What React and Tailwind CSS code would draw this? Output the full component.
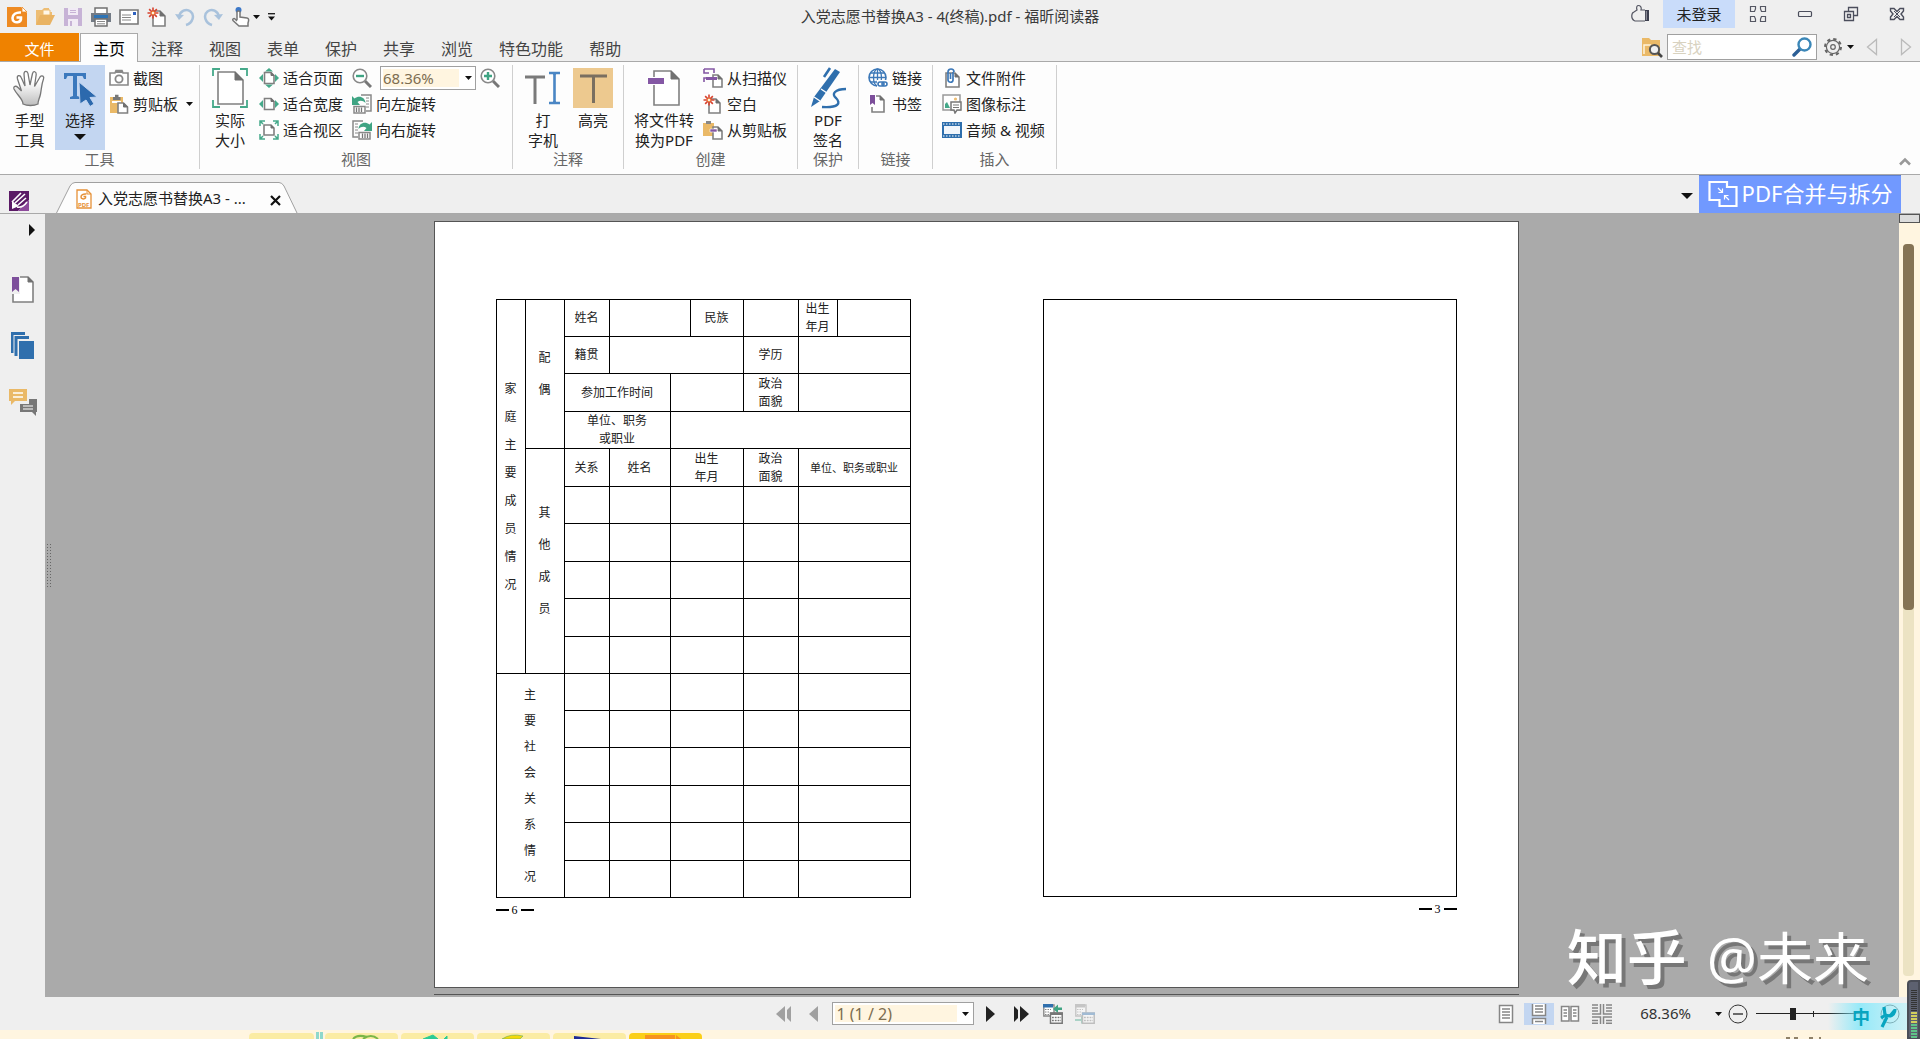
// src/App.jsx
import React from "react";

/* ---------- small shared pieces ---------- */

const Svg = ({ w = 20, h = 20, className = "", children }) => (
  <svg
    width={w}
    height={h}
    viewBox={`0 0 ${w} ${h}`}
    fill="none"
    aria-hidden="true"
    className={`shrink-0 ${className}`}
  >
    {children}
  </svg>
);

const Caret = ({ w = 7, h = 4, className = "" }) => (
  <Svg w={w} h={h} className={className}>
    <path d={`M0 0H${w}L${w / 2} ${h}Z`} fill="#111" />
  </Svg>
);

const Burst = ({ x = 6, y = 6, r = 6 }) => (
  <g stroke="#d8432f" strokeWidth="1.6" transform={`translate(${x} ${y})`}>
    <path d={`M0 ${-r}V${r}M${-r} 0H${r}`} />
    <path d={`M${-r * 0.7} ${-r * 0.7}L${r * 0.7} ${r * 0.7}M${r * 0.7} ${-r * 0.7}L${-r * 0.7} ${r * 0.7}`} />
    <circle r="1.6" fill="#fff" stroke="#f08c3c" strokeWidth="1" />
  </g>
);

const Sheet = ({ x = 0, y = 0, w = 11, h = 14, c = 4 }) => (
  <g transform={`translate(${x} ${y})`}>
    <path d={`M0 0H${w - c}L${w} ${c}V${h}H0Z`} fill="#fff" stroke="#808080" strokeWidth="1.6" />
    <path d={`M${w - c} 0L${w} ${c}H${w - c}Z`} fill="#707070" stroke="#707070" />
  </g>
);

/* ---------- quick access bar icons ---------- */

const LogoIcon = () => (
  <Svg>
    <path d="M0 0H14L20 6V20H0Z" fill="#ee8a22" />
    <path d="M15 0L20 5H15Z" fill="#fff" stroke="#ee8a22" strokeWidth=".8" />
    <path d="M14 5.500C9 5 5.500 7.500 5.500 11S8 15.500 10.500 15.200C13 15 14.200 13 14 10.500H9.500" stroke="#fff" strokeWidth="2.600" />
  </Svg>
);

const OpenIcon = () => (
  <Svg>
    <path d="M1 18V3H7L9 1H14V5H17V8" fill="#edbd74" />
    <path d="M8 3H15V8H8Z" fill="#fff7e8" stroke="#edbd74" />
    <path d="M5 8H20L15 18H1Z" fill="#e9b363" />
  </Svg>
);

const SaveIcon = () => (
  <Svg>
    <path d="M1 1H19V19H1Z" fill="#c7b3d6" />
    <path d="M5 1H15V8H5Z" fill="#f1ebf5" />
    <path d="M7 3.500H13M7 5.500H13" stroke="#c7b3d6" />
    <path d="M5 12H15V19H5Z" fill="#f1ebf5" />
    <path d="M7 14H9V19H7Z" fill="#c7b3d6" />
  </Svg>
);

const PrintIcon = () => (
  <Svg>
    <path d="M4 1H16V7H4Z" fill="#fff" stroke="#707070" strokeWidth="1.500" />
    <path d="M0 6H20V15H0Z" fill="#737b85" />
    <path d="M3 8H17V11H3Z" fill="#2e74b5" />
    <path d="M4 12H16V19H4Z" fill="#fff" stroke="#707070" strokeWidth="1.500" />
    <path d="M6 14.500H14M6 16.800H14" stroke="#8a8a8a" />
  </Svg>
);

const MailIcon = () => (
  <Svg>
    <path d="M1 3H19V17H1Z" fill="#fff" stroke="#777" strokeWidth="1.600" />
    <path d="M3 8H12M3 10.500H12M3 13H12" stroke="#888" />
    <path d="M14 5H17V8H14Z" fill="#2e62c0" />
  </Svg>
);

const NewIcon = () => (
  <Svg>
    <Sheet x={6} y={4} w={12} h={15} c={5} />
    <Burst x={6} y={6} r={5.5} />
  </Svg>
);

const UndoIcon = ({ flip }) => (
  <Svg className={flip ? "-scale-x-100" : ""}>
    <path d="M4 10C5 4 11 1 15.500 4.500S18 16 11 18" stroke="#a9c2dc" strokeWidth="2.500" />
    <path d="M0 7L4 13L9 8Z" fill="#a9c2dc" />
  </Svg>
);

const TouchIcon = () => (
  <Svg>
    <circle cx="7.500" cy="3" r="3" fill="#3c78c8" />
    <path
      d="M6 13V5C6 3.500 9 3.500 9 5V10L16 11C18 11.500 18 13 17 16V19H8L2 13.500C1 12 3 11 4 12L6 14"
      fill="#fff"
      stroke="#777"
      strokeWidth="1.500"
    />
  </Svg>
);

/* ---------- ribbon icons ---------- */

const HandIcon = () => (
  <Svg w={36} h={38}>
    <defs>
      <linearGradient id="palm" x1="0" y1="0" x2="0" y2="1">
        <stop offset=".3" stopColor="#fff" />
        <stop offset="1" stopColor="#bdbdbd" />
      </linearGradient>
    </defs>
    <path
      d="M11 35C11 30 5 26 2 20C1 17 4 16.500 6 18.500L9.500 22L5.500 10C4.500 6 8 5.500 9.200 8.500L13 17L12 5C12 1.500 15.500 1.500 16 4.500L18 16L20.500 4.500C21.500 1.500 24.500 2.500 24.200 5.500L22.500 17.500L28 8C30 5.500 32.500 7.500 31.500 10C29.500 15 29.500 20 28.500 25C27.500 30 26 31 26 35C22 37 15 37 11 35Z"
      fill="url(#palm)"
      stroke="#777"
      strokeWidth="1.300"
    />
  </Svg>
);

const SelectIcon = () => (
  <Svg w={36} h={38}>
    <path d="M2 4H24V10H22L20.500 7H15V27L18 28V30H8V28L11 27V7H5.500L4 10H2Z" fill="#3a78bd" />
    <path d="M17 13L35 28L28 28.500L32 35L28 37.500L24 31L18 35Z" fill="#2c69ad" stroke="#c3d6f1" />
  </Svg>
);

const CameraIcon = () => (
  <Svg>
    <path d="M1 5H6L7 2.500H13L14 5H19V17H1Z" fill="#fff" stroke="#888" strokeWidth="1.600" />
    <circle cx="10" cy="11" r="3.600" stroke="#888" strokeWidth="1.800" />
    <path d="M7 2.500H13V5H7Z" fill="#888" />
  </Svg>
);

const PasteIcon = () => (
  <Svg>
    <path d="M1 3H14V19H1Z" fill="#eab967" />
    <path d="M4 3H6V0.800H9.500V3H11.500V6H4Z" fill="#777" />
    <path d="M3 7H12V9H3Z" fill="#fff" />
    <Sheet x={9} y={9} w={9.5} h={10} c={4} />
  </Svg>
);

const ActualIcon = () => (
  <Svg w={36} h={40}>
    <path d="M1 8V1H8M28 1H35V8M1 32V39H8M28 39H35V32" stroke="#45a98a" strokeWidth="1.800" />
    <Sheet x={6} y={4} w={25} h={32} c={8} />
  </Svg>
);

const FitIcon = ({ mode }) => (
  <Svg>
    {mode === "area" ? (
      <>
        <path d="M1 6V1H6M14 1H19V6M1 14V19H6M14 19H19V14M1 1L4 4M19 1L16 4M1 19L4 16M19 19L16 16" stroke="#45a98a" strokeWidth="1.500" />
        <Sheet x={5} y={5} w={10} h={10} c={3} />
      </>
    ) : (
      <>
        <path d="M0 10L4 6V14ZM20 10L16 6V14Z" fill="#45a98a" />
        {mode === "page" && <path d="M10 0L14 3.500H6ZM10 20L14 16.500H6Z" fill="#45a98a" />}
        <Sheet x={5.500} y={4.500} w={9.500} h={11} c={3} />
      </>
    )}
  </Svg>
);

const ZoomIcon = ({ plus }) => (
  <Svg>
    <path d="M13 13L19 19" stroke="#777" strokeWidth="3" />
    <circle cx="8" cy="8" r="6.800" fill="#fff" stroke="#888" strokeWidth="1.600" />
    <path d={plus ? "M4 8H12M8 4V12" : "M4 8H12"} stroke="#3fa483" strokeWidth="2.400" />
  </Svg>
);

const RotateIcon = ({ flip }) => (
  <Svg className={flip ? "-scale-x-100" : ""}>
    <path d="M9 1H19V17H14" stroke="#888" strokeWidth="1.500" />
    <path d="M14 4H17M14 7H17M14 10H17M14 13H17" stroke="#888" />
    <path d="M0 2V11H8L5.500 8C8 6 11 6.500 13.500 9C13 3 7 1 2.500 4.500Z" fill="#3fa483" />
    <path d="M2 12.500H13V19H2Z" fill="#fff" stroke="#888" strokeWidth="1.500" />
    <path d="M4.500 13.500V18M7 13.500V18M9.500 13.500V18" stroke="#777" strokeWidth="1.300" />
  </Svg>
);

const TypewriterIcon = () => (
  <Svg w={38} h={40}>
    <path d="M1 9H21M11 9V36" stroke="#7a7a7a" strokeWidth="3" />
    <path d="M25 5H36M25 35H36M30.500 5V35" stroke="#4a86c4" strokeWidth="2.600" />
    <path d="M28 5L30.500 8L33 5ZM28 35L30.500 32L33 35Z" fill="#4a86c4" />
  </Svg>
);

const HighlightIcon = () => (
  <Svg w={40} h={40}>
    <path d="M0 0H40V40H0Z" fill="#edc98f" />
    <path d="M7 8H34M20.500 8V35" stroke="#7a6f60" strokeWidth="3" />
  </Svg>
);

const ConvertIcon = () => (
  <Svg w={34} h={40}>
    <Sheet x={7} y={3} w={25} h={34} c={8} />
    <path d="M0 9H18V17H0Z" fill="#fff" />
    <path d="M1 10H17V16H1Z" fill="#8457a4" />
  </Svg>
);

const ScanIcon = () => (
  <Svg>
    <path d="M1 1H11V5M1 1V5H6M1 14V10H10" stroke="#8457a4" strokeWidth="1.600" />
    <Sheet x={10} y={7} w={9} h={12} c={4} />
    <path d="M3 9H14V12H3Z" fill="#8457a4" />
  </Svg>
);

const BlankIcon = () => (
  <Svg>
    <Sheet x={6} y={5} w={11} h={14} c={4} />
    <Burst x={6} y={6} r={5.500} />
  </Svg>
);

const ClipIcon = () => (
  <Svg>
    <path d="M0 3H11V16H0Z" fill="#eab967" />
    <path d="M3 1H8V4H3Z" fill="#888" />
    <Sheet x={10} y={7} w={9} h={12} c={4} />
    <path d="M7 9H14V12H7Z" fill="#8457a4" stroke="#fff" strokeWidth=".6" />
  </Svg>
);

const SignIcon = () => (
  <Svg w={38} h={42}>
    <path d="M26 2L31 5L11 34L2 40L5 30Z" fill="#2f6fad" />
    <path d="M12 22L18 26M5 30L11 34" stroke="#fff" strokeWidth="1.400" />
    <path d="M21 1L15 10" stroke="#2f6fad" strokeWidth="2.600" />
    <path d="M37 22C26 22 22 27 27 31C32 36 30 41 13 40" stroke="#2f6fad" strokeWidth="2.400" />
  </Svg>
);

const GlobeIcon = () => (
  <Svg>
    <circle cx="9.500" cy="9.500" r="8.500" stroke="#3c78b8" strokeWidth="1.600" />
    <ellipse cx="9.500" cy="9.500" rx="4" ry="8.500" stroke="#3c78b8" strokeWidth="1.300" />
    <path d="M1 9.500H18M2.500 5H16.500M2.500 14H10M9.500 1V18" stroke="#3c78b8" strokeWidth="1.300" />
    <path d="M9 12H20V20H9Z" fill="#fff" />
    <rect x="10" y="14" width="6" height="4" rx="2" stroke="#3c78b8" strokeWidth="1.600" />
    <rect x="14" y="14" width="5" height="4" rx="2" stroke="#3c78b8" strokeWidth="1.600" />
  </Svg>
);

const BookmarkIcon = ({ big }) =>
  big ? (
    <Svg w={24} h={28}>
      <Sheet x={2} y={1} w={20} h={25} c={5} />
      <path d="M0 0H9V18H0Z" fill="#efefef" />
      <path d="M1 1H8V16L4.500 13L1 16Z" fill="#7d4f9b" />
    </Svg>
  ) : (
    <Svg>
      <Sheet x={4} y={2} w={12} h={16} c={4} />
      <path d="M1 0H8V13H1Z" fill="#fff" />
      <path d="M2 1H7V11L4.500 9L2 11Z" fill="#7d4f9b" />
    </Svg>
  );

const AttachIcon = () => (
  <Svg>
    <Sheet x={4} y={5} w={13} h={14} c={4} />
    <path d="M11 4V12C11 15 6 15 6 12V4C6 0 12 0 12 4M8.500 5V11" stroke="#3c78b8" strokeWidth="1.700" />
  </Svg>
);

const ImageIcon = () => (
  <Svg>
    <path d="M1 1H18V16H1Z" fill="#fff" stroke="#999" strokeWidth="1.500" />
    <circle cx="13.500" cy="5" r="1.600" fill="#edbd74" />
    <path d="M3 14V10L5 8L8 14Z" fill="#45a98a" />
    <path d="M9 8H19V16H15L13 19L12 16H9Z" fill="#fff" stroke="#777" strokeWidth="1.500" />
    <path d="M11 11H17M11 13.500H17" stroke="#777" />
  </Svg>
);

const FilmIcon = () => (
  <Svg>
    <path d="M0 2H20V18H0Z" fill="#2f6fad" />
    <path d="M2 6H18V14H2Z" fill="#f2f6fb" />
    <path d="M1 4H19M1 16H19" stroke="#fff" strokeWidth="1.200" strokeDasharray="1.500 1.500" />
  </Svg>
);

/* ---------- window controls ---------- */

const ThumbIcon = () => (
  <Svg w={20} h={20}>
    <path d="M14 6H10C11 3 9 1.500 7.500 1.500S5 3 6 6L3 8C0 9 0 15 3 16.500L4 17H14" stroke="#555763" strokeWidth="1.200" />
    <path d="M14 6H18V17H14Z" fill="#3c3f4e" />
    <path d="M15.300 7V16" stroke="#9a9ca6" />
  </Svg>
);

const SkinIcon = () => (
  <Svg w={18} h={18}>
    <path
      d="M1.500 1.500H6.500V4L5.500 6.500H1.500ZM16.500 1.500H11.500V4L12.500 6.500H16.500ZM1.500 16.500H6.500V14L5.500 11.500H1.500ZM16.500 16.500H11.500V14L12.500 11.500H16.500Z"
      stroke="#555763"
      strokeWidth="1.200"
    />
  </Svg>
);

const MinIcon = () => (
  <Svg w={16} h={16}>
    <rect x="1.500" y="5.500" width="13" height="5" rx="1" stroke="#4b4e5c" strokeWidth="1.200" />
  </Svg>
);

const RestoreIcon = () => (
  <Svg w={16} h={16}>
    <path d="M5.500 5V1.500H14.500V9.500H11M1.500 5.500H10.500V14.500H1.500ZM4.500 8.500H7.500V11.500H4.500Z" stroke="#4b4e5c" strokeWidth="1.300" />
  </Svg>
);

const CloseIcon = () => (
  <Svg w={16} h={16}>
    <path
      d="M1.500 2.500H5L8 5.500L11 2.500H14.500V5L12 8L14.500 11V13.500H11L8 10.500L5 13.500H1.500V11L4 8L1.500 5Z"
      stroke="#4b4e5c"
      strokeWidth="1.400"
    />
    <path d="M5 5L11 11M11 5L5 11" stroke="#4b4e5c" />
  </Svg>
);

const FolderSearchIcon = () => (
  <Svg w={22} h={22}>
    <path d="M1 2H8L10 4H19V20H1Z" fill="#eab967" />
    <path d="M3 18V9H10" stroke="#fff3dc" strokeWidth="1.500" />
    <circle cx="13.500" cy="13.500" r="4.600" fill="#efefef" stroke="#555" strokeWidth="2" />
    <path d="M17 17L21 21" stroke="#444" strokeWidth="2.600" />
  </Svg>
);

const SearchIcon = () => (
  <Svg>
    <path d="M8 12L2 18" stroke="#2c5f96" strokeWidth="3.400" strokeLinecap="round" />
    <circle cx="12.500" cy="7.500" r="6" fill="#fff" stroke="#3b87b8" strokeWidth="2.400" />
  </Svg>
);

const GearIcon = () => (
  <Svg>
    <circle cx="10" cy="10" r="8" stroke="#666" strokeWidth="2" strokeDasharray="3.300 2.980" />
    <circle cx="10" cy="10" r="6.600" stroke="#666" strokeWidth="1.200" fill="#efefef" />
    <circle cx="10" cy="10" r="2.300" stroke="#666" strokeWidth="1.200" />
  </Svg>
);

const MergeIcon = () => (
  <Svg w={30} h={28}>
    <path d="M1.500 2H19V7H28.500V26H11.500V20H1.500Z" stroke="#fff" strokeWidth="2.200" />
    <path d="M10 8L14 12M14.500 8.500V12.500H10.500M21 20L17 16M16.500 19.500V15.500H20.500" stroke="#fff" strokeWidth="1.200" />
  </Svg>
);

/* ---------- side panel icons ---------- */

const PhantomIcon = () => (
  <Svg>
    <path d="M0 0H20V9L9 20H0Z" fill="#5b1a66" />
    <path d="M20 9V20H9Z" fill="#8d4a9b" />
    <path d="M3 11L12 2M6 12L16 3M9 14L17 7" stroke="#fff" strokeWidth="1.600" />
    <path d="M3 10L10 15L3 18Z" fill="#fff" />
    <path d="M8 16C12 17 15 15 18 11" stroke="#fff" strokeWidth="1.600" />
  </Svg>
);

const PdfDocIcon = () => (
  <Svg w={16} h={20}>
    <path d="M1 1H11L15 5V19H1Z" fill="#fff" stroke="#e69138" strokeWidth="1.300" />
    <path d="M11 1V5H15" stroke="#e69138" />
    <path d="M10.500 5C7 4.500 5 6 5 8S8 10.500 9.500 9V7.500H7.500" stroke="#e69138" strokeWidth="1.500" />
    <text x="2" y="17.500" fontSize="6" fontWeight="700" fill="#e69138" fontFamily="Noto Sans">PDF</text>
  </Svg>
);

const PagesIcon = () => (
  <Svg w={24} h={28}>
    <path d="M14 1.500H1V21" stroke="#2f6fad" strokeWidth="3" />
    <path d="M18 5.500H5V24" stroke="#2f6fad" strokeWidth="3" />
    <path d="M8 9H23V27H8Z" fill="#2f6fad" />
  </Svg>
);

const CommentsIcon = () => (
  <Svg w={28} h={28}>
    <path d="M0 1H18V13H6L2 17V13H0Z" fill="#eab967" />
    <path d="M4 5H14M4 9H14" stroke="#fff" strokeWidth="1.400" />
    <path d="M20 11H28V24H27V28L23 24H11V16H20Z" fill="#777" />
    <path d="M14 18H24M14 21H24" stroke="#fff" strokeWidth="1.200" />
  </Svg>
);

/* ---------- status bar icons ---------- */

const ViewIcon = ({ kind }) => (
  <Svg>
    <g fill="#fff" stroke="#868686" strokeWidth="1.500">
      {kind === "single" && <path d="M3.500 1.500H16.500V18.500H3.500ZM6 5H14M6 8H14M6 11H14M6 14H14" />}
      {kind === "scroll" && <path d="M3.500 0V11.500H16.500V0M6 2H14M6 5H14M6 8H14M3.500 20V14.500H16.500V20M6 17.500H14" />}
      {kind === "facing" && (
        <path d="M1.500 2.500H9V17H1.500ZM11 2.500H18.500V17H11ZM3.500 6H7M3.500 9H7M3.500 12H7M13 6H16.500M13 9H16.500M13 12H16.500" />
      )}
      {kind === "both" && (
        <path d="M0 10H8.500V0M20 10H11.500V0M0 13H8.500V20M20 13H11.500V20M0 1H6M0 4H6M0 7H6M14 1H20M14 4H20M14 7H20M0 16.500H6M0 19.300H6M14 16.500H20M14 19.300H20" fill="none" />
      )}
    </g>
  </Svg>
);

const JumpIcon = ({ faded }) => (
  <Svg className={faded ? "opacity-40" : ""}>
    <path d="M0.800 1H11V12H0.800Z" fill="#fff" stroke="#888" strokeWidth="1.400" />
    <path d="M0 0H10V3.500H0Z" fill={faded ? "#888" : "#2f6fad"} />
    <path d="M2 5.500H8M2 8H6M2 10.500H6" stroke="#888" strokeDasharray="1.500 1" />
    {faded ? (
      <path d="M0 15H6V12L10 16L6 20V17H0Z" fill="#45a98a" />
    ) : (
      <path d="M19 3.500H15V0.500L10 5L15 9V6H19Z" fill="#3fa483" />
    )}
    <path d="M7.500 9H19.200V19.200H7.500Z" fill="#fff" stroke="#777" strokeWidth="1.500" />
    <path d="M7 8.500H20V11H7Z" fill={faded ? "#2f6fad" : "#777"} />
    <path d="M9 13.500H18M9 16.500H18" stroke="#777" strokeWidth="1.300" strokeDasharray="1.800 1" />
  </Svg>
);

/* ---------- title bar + menu tabs ---------- */

const quickIcons = [
  ["福昕", <LogoIcon />],
  ["打开", <OpenIcon />],
  ["保存", <SaveIcon />],
  ["打印", <PrintIcon />],
  ["邮件", <MailIcon />],
  ["新建", <NewIcon />],
  ["撤销", <UndoIcon />],
  ["重做", <UndoIcon flip />],
  ["触摸模式", <TouchIcon />],
];

const TitleBar = () => (
  <div className="grid h-[33px] grid-cols-[1fr_auto_1fr] items-center">
    <div className="flex items-center gap-2 pl-[7px]">
      {quickIcons.map(([label, icon]) => (
        <button key={label} type="button" aria-label={label}>
          {icon}
        </button>
      ))}
      <button type="button" aria-label="更多" className="-ml-1.5">
        <Caret />
      </button>
      <button type="button" aria-label="自定义">
        <Svg w={7} h={8}>
          <path d="M0 .7H7" stroke="#222" strokeWidth="1.400" />
          <path d="M0 3.500H7L3.500 7.500Z" fill="#111" />
        </Svg>
      </button>
    </div>
    <h1 className="pr-5 pb-0.5 text-[15px] leading-5 text-[#3a3a3a]">
      入党志愿书替换A3 - 4(终稿).pdf - 福昕阅读器
    </h1>
    <div className="flex h-full items-start justify-end pr-[15px]">
      <button type="button" aria-label="点赞" className="flex h-7 w-8 items-center">
        <ThumbIcon />
      </button>
      <button type="button" className="mr-3.5 h-7 w-[72px] bg-[#c9dcfa] text-[15px] text-[#222]">
        未登录
      </button>
      <div className="flex h-7 items-center gap-[30px]">
        <button type="button" aria-label="皮肤">
          <SkinIcon />
        </button>
        <button type="button" aria-label="最小化">
          <MinIcon />
        </button>
        <button type="button" aria-label="还原">
          <RestoreIcon />
        </button>
        <button type="button" aria-label="关闭">
          <CloseIcon />
        </button>
      </div>
    </div>
  </div>
);

const menuTabs = ["注释", "视图", "表单", "保护", "共享", "浏览", "特色功能", "帮助"];

const MenuBar = () => (
  <div className="flex h-7 items-stretch">
    <button type="button" className="w-[79px] bg-[#ef8200] pt-1 text-[15px] text-white">
      文件
    </button>
    <nav className="flex flex-1 text-base text-[#444]">
      <button
        type="button"
        className="relative -mb-px ml-px border border-b-0 border-[#a9a9a9] bg-[#fdfdfd] px-3 pt-0.5 text-black"
      >
        主页
      </button>
      {menuTabs.map((tab) => (
        <button key={tab} type="button" className="px-[13px] pt-1">
          {tab}
        </button>
      ))}
    </nav>
    <div className="flex items-center pr-2">
      <button type="button" aria-label="在文件夹中查找" className="mr-1">
        <FolderSearchIcon />
      </button>
      <label className="flex h-[26px] w-[150px] items-center border border-[#a0a0a0] bg-white px-1">
        <input
          type="text"
          aria-label="查找"
          placeholder="查找"
          className="min-w-0 flex-1 text-[15px] leading-5 outline-none placeholder:text-[#d8d2bf]"
        />
        <SearchIcon />
      </label>
      <button type="button" aria-label="设置" className="ml-1.5 flex items-center gap-1">
        <GearIcon />
        <Caret />
      </button>
      <button type="button" aria-label="上一个" className="ml-3">
        <Svg w={12} h={18}>
          <path d="M10.500 1.500V16.500L1.500 9Z" stroke="#bbb" strokeWidth="1.300" />
        </Svg>
      </button>
      <button type="button" aria-label="下一个" className="ml-[22px]">
        <Svg w={12} h={18}>
          <path d="M1.500 1.500V16.500L10.500 9Z" stroke="#bbb" strokeWidth="1.300" />
        </Svg>
      </button>
    </div>
  </div>
);

/* ---------- ribbon ---------- */

const Group = ({ label, className = "", children }) => (
  <section className={`flex h-[104px] shrink-0 flex-col border-r border-[#cfcfcf] ${className}`}>
    <div className="flex h-[84px] items-start">{children}</div>
    <div className="text-center leading-5 text-[#666]">{label}</div>
  </section>
);

const BigButton = ({ icon, lines, className = "" }) => (
  <button type="button" className={`flex flex-col items-center leading-5 ${className}`}>
    <span className="flex h-[45px] items-center">{icon}</span>
    {lines.map((line) => (
      <span key={line}>{line}</span>
    ))}
  </button>
);

const SmallButton = ({ icon, label, arrow }) => (
  <button type="button" className="flex h-[26px] items-center gap-1">
    {icon}
    <span className="whitespace-nowrap">{label}</span>
    {arrow && <Caret className="ml-1" />}
  </button>
);

const Ribbon = () => (
  <div className="flex h-[114px] items-start border-y border-[#a9a9a9] bg-[#fdfdfd] pt-[3px] text-[15px] text-[#222]">
    <Group label="工具" className="w-[200px]">
      <BigButton className="w-[55px] pl-1" icon={<HandIcon />} lines={["手型", "工具"]} />
      <button type="button" className="flex h-[85px] w-[50px] flex-col items-center bg-[#c3d6f1] leading-5">
        <span className="flex h-[45px] items-center">
          <SelectIcon />
        </span>
        <span>选择</span>
        <Caret w={12} h={6} className="mt-1" />
      </button>
      <div className="ml-1">
        <SmallButton icon={<CameraIcon />} label="截图" />
        <SmallButton icon={<PasteIcon />} label="剪贴板" arrow />
      </div>
    </Group>

    <Group label="视图" className="w-[313px]">
      <BigButton className="ml-2 w-11" icon={<ActualIcon />} lines={["实际", "大小"]} />
      <div className="ml-[7px]">
        <SmallButton icon={<FitIcon mode="page" />} label="适合页面" />
        <SmallButton icon={<FitIcon mode="width" />} label="适合宽度" />
        <SmallButton icon={<FitIcon mode="area" />} label="适合视区" />
      </div>
      <div className="ml-[9px]">
        <div className="flex h-[26px] items-center">
          <button type="button" aria-label="缩小">
            <ZoomIcon />
          </button>
          <div className="mr-1 ml-2 flex h-6 w-24 items-center border border-[#a0a0a0] bg-white p-0.5">
            <input
              type="text"
              aria-label="缩放比例"
              defaultValue="68.36%"
              className="h-full w-[76px] min-w-0 bg-[#fff5e0] text-[#7d6d50] outline-none"
            />
            <button type="button" aria-label="选择比例" className="ml-1.5">
              <Caret />
            </button>
          </div>
          <button type="button" aria-label="放大">
            <ZoomIcon plus />
          </button>
        </div>
        <SmallButton icon={<RotateIcon />} label="向左旋转" />
        <SmallButton icon={<RotateIcon flip />} label="向右旋转" />
      </div>
    </Group>

    <Group label="注释" className="w-[111px]">
      <BigButton className="ml-1.5 w-12" icon={<TypewriterIcon />} lines={["打", "字机"]} />
      <BigButton className="ml-0.5 w-12" icon={<HighlightIcon />} lines={["高亮"]} />
    </Group>

    <Group label="创建" className="w-[174px]">
      <BigButton className="ml-2 w-16" icon={<ConvertIcon />} lines={["将文件转", "换为PDF"]} />
      <div className="ml-[7px]">
        <SmallButton icon={<ScanIcon />} label="从扫描仪" />
        <SmallButton icon={<BlankIcon />} label="空白" />
        <SmallButton icon={<ClipIcon />} label="从剪贴板" />
      </div>
    </Group>

    <Group label="保护" className="w-[61px]">
      <BigButton className="flex-1" icon={<SignIcon />} lines={["PDF", "签名"]} />
    </Group>

    <Group label="链接" className="w-[74px]">
      <div className="ml-[9px]">
        <SmallButton icon={<GlobeIcon />} label="链接" />
        <SmallButton icon={<BookmarkIcon />} label="书签" />
      </div>
    </Group>

    <Group label="插入" className="w-[124px]">
      <div className="ml-[9px]">
        <SmallButton icon={<AttachIcon />} label="文件附件" />
        <SmallButton icon={<ImageIcon />} label="图像标注" />
        <SmallButton icon={<FilmIcon />} label="音频 & 视频" />
      </div>
    </Group>

    <button type="button" aria-label="折叠功能区" className="mr-2 mb-2 ml-auto self-end">
      <Svg w={14} h={9}>
        <path d="M2 7.500L7 2.500L12 7.500" stroke="#999" strokeWidth="2.600" />
      </Svg>
    </button>
  </div>
);

/* ---------- document tabs ---------- */

const DocTabs = () => (
  <div className="flex h-[39px] items-end border-b border-[#a9a9a9]">
    <button type="button" aria-label="福昕高级编辑器" className="mb-0.5 ml-[9px]">
      <PhantomIcon />
    </button>
    <div className="relative ml-[27px] h-[31px] w-[242px]">
      <svg className="absolute inset-0 h-full w-full" viewBox="0 0 242 31" aria-hidden="true">
        <path d="M0.500 31L14 4Q16 0.500 19 0.500H223Q226 0.500 228 4L241 31" fill="#fdfdfd" stroke="#a0a0a0" />
      </svg>
      <div className="relative flex h-full items-center pt-0.5 pl-5">
        <PdfDocIcon />
        <span className="ml-1.5 w-[172px] truncate text-[15px] text-[#222]">入党志愿书替换A3 - ...</span>
        <button type="button" aria-label="关闭标签">
          <Svg w={11} h={11} className="mt-1">
            <path d="M1 1L10 10M10 1L1 10" stroke="#111" strokeWidth="2.200" />
          </Svg>
        </button>
      </div>
    </div>
    <button type="button" aria-label="所有标签" className="mb-3.5 ml-auto">
      <Caret w={12} h={6} />
    </button>
    <a
      href="#merge"
      className="mr-[19px] ml-1.5 flex h-[38px] w-[202px] items-center justify-center gap-1 border-t border-[#5c7fd0] bg-[#7199ff] pb-0.5 text-[22px] whitespace-nowrap text-white"
    >
      <MergeIcon />
      PDF合并与拆分
    </a>
  </div>
);

/* ---------- document ---------- */

const Cell = ({ children, ...rest }) => (
  <td {...rest} className="border border-black p-0 text-center align-middle leading-[18px]">
    {children}
  </td>
);

const Vertical = ({ text, className }) => (
  <div className={`flex flex-col items-center ${className}`}>
    {text.split("").map((ch, i) => (
      <span key={i}>{ch}</span>
    ))}
  </div>
);

const Blanks = () => (
  <>
    <Cell />
    <Cell />
    <Cell colSpan={2} />
    <Cell />
    <Cell colSpan={2} />
  </>
);

const FormTable = () => (
  <table className="w-[414px] table-fixed border-collapse text-xs text-[#222]">
    <colgroup>
      <col className="w-[29px]" />
      <col className="w-[39px]" />
      <col className="w-[45px]" />
      <col className="w-[61px]" />
      <col className="w-5" />
      <col className="w-[53px]" />
      <col className="w-[55px]" />
      <col className="w-[39px]" />
      <col className="w-[73px]" />
    </colgroup>
    <tbody>
      <tr className="h-[37px]">
        <Cell rowSpan={10}>
          <Vertical text="家庭主要成员情况" className="leading-7" />
        </Cell>
        <Cell rowSpan={4}>
          <Vertical text="配偶" className="leading-8" />
        </Cell>
        <Cell>姓名</Cell>
        <Cell colSpan={2} />
        <Cell>民族</Cell>
        <Cell />
        <Cell>
          出生
          <br />
          年月
        </Cell>
        <Cell />
      </tr>
      <tr className="h-[37px]">
        <Cell>籍贯</Cell>
        <Cell colSpan={3} />
        <Cell>学历</Cell>
        <Cell colSpan={2} />
      </tr>
      <tr className="h-[38px]">
        <Cell colSpan={2}>参加工作时间</Cell>
        <Cell colSpan={2} />
        <Cell>
          政治
          <br />
          面貌
        </Cell>
        <Cell colSpan={2} />
      </tr>
      <tr className="h-[37px]">
        <Cell colSpan={2}>
          单位、职务
          <br />
          或职业
        </Cell>
        <Cell colSpan={5} />
      </tr>
      <tr className="h-[38px]">
        <Cell rowSpan={6}>
          <Vertical text="其他成员" className="leading-8" />
        </Cell>
        <Cell>关系</Cell>
        <Cell>姓名</Cell>
        <Cell colSpan={2}>
          出生
          <br />
          年月
        </Cell>
        <Cell>
          政治
          <br />
          面貌
        </Cell>
        <Cell colSpan={2}>
          <span className="text-[11px]">单位、职务或职业</span>
        </Cell>
      </tr>
      {[1, 2, 3, 4, 5].map((n) => (
        <tr key={n} className="h-[37px] odd:h-[38px]">
          <Blanks />
        </tr>
      ))}
      <tr className="h-[37px]">
        <Cell rowSpan={6} colSpan={2}>
          <Vertical text="主要社会关系情况" className="leading-[26px]" />
        </Cell>
        <Blanks />
      </tr>
      {[1, 2, 3, 4, 5].map((n) => (
        <tr key={n} className="h-[37px] odd:h-[38px]">
          <Blanks />
        </tr>
      ))}
    </tbody>
  </table>
);

const PageNumber = ({ n, className = "" }) => (
  <div className={`flex items-center gap-[3px] font-['Liberation_Serif',serif] text-xs leading-6 text-black ${className}`}>
    <span className="h-0.5 w-[13px] bg-black" />
    {n}
    <span className="h-0.5 w-[13px] bg-black" />
  </div>
);

const Workspace = () => (
  <div className="flex min-h-0 flex-1">
    <aside className="flex w-[45px] shrink-0 flex-col items-center bg-[#efefef]">
      <button type="button" aria-label="展开导航" className="mt-2.5 mr-2.5 self-end">
        <Svg w={6} h={12}>
          <path d="M0 0L6 6L0 12Z" fill="#111" />
        </Svg>
      </button>
      <button type="button" aria-label="书签" className="mt-10">
        <BookmarkIcon big />
      </button>
      <button type="button" aria-label="页面" className="mt-7">
        <PagesIcon />
      </button>
      <button type="button" aria-label="注释" className="mt-7">
        <CommentsIcon />
      </button>
    </aside>

    <main className="relative flex flex-1 overflow-hidden bg-[#aaaaaa]">
      <div className="flex w-2 items-center justify-center">
        <Svg w={4} h={44} className="-mt-20">
          <path d="M.5 0V44M3.500 0V44" stroke="#666" strokeDasharray="1 2" />
        </Svg>
      </div>
      <div className="flex flex-1 flex-col items-center gap-1.5 pt-[7px]">
        <article className="flex w-[1085px] items-start justify-between border border-[#555] bg-white px-[61px] pt-[77px] pb-[65px]">
          <div>
            <FormTable />
            <PageNumber n={6} />
          </div>
          <div>
            <div className="h-[598px] w-[414px] border border-black" />
            <PageNumber n={3} className="justify-end" />
          </div>
        </article>
        <div className="h-10 w-[1085px] border-t border-[#555] bg-[#aaaaaa]" />
      </div>
      <div className="absolute right-[30px] bottom-0.5 flex items-center gap-5 leading-[76px] whitespace-nowrap text-white [text-shadow:4px_4px_0_#777]">
        <span className="text-[60px] font-medium">知乎</span>
        <span className="text-[56px]">@未来</span>
      </div>
    </main>

    {/* vertical scroll bar */}
    <div className="flex w-[21px] shrink-0 flex-col bg-[#fff5e0]">
      <div className="h-[9px] border border-[#555] bg-[#dcdcdc]" />
      <div className="mt-[21px] mb-[21px] ml-1 w-[11px] flex-1 rounded bg-[#ece3c3]">
        <div className="h-1/2 rounded bg-[#857355]" />
      </div>
    </div>
  </div>
);

/* ---------- status bar ---------- */

const StatusBar = () => (
  <div className="relative grid h-[33px] shrink-0 grid-cols-[1fr_auto_1fr] items-center bg-[#efefef] text-[15px]">
    <span />
    <div className="flex items-center pr-[50px]">
      <button type="button" aria-label="首页">
        <Svg w={16} h={16}>
          <path d="M9 0V16L0 8ZM15 0V16L11 12V4Z" fill="#a0a0a0" />
        </Svg>
      </button>
      <button type="button" aria-label="上一页" className="ml-[17px]">
        <Svg w={9} h={16}>
          <path d="M9 0V16L0 8Z" fill="#a0a0a0" />
        </Svg>
      </button>
      <label className="relative mr-3 ml-3.5 flex h-[23px] w-[142px] items-center border border-[#a0a0a0] bg-white p-0.5">
        <select
          aria-label="页码"
          className="h-full w-full appearance-none bg-linear-to-r from-[#fff5e0] from-90% to-white to-90% pl-0.5 text-base leading-4 text-[#7d6d50] outline-none"
        >
          <option>1 (1 / 2)</option>
          <option>2 (2 / 2)</option>
        </select>
        <Caret className="absolute right-1" />
      </label>
      <button type="button" aria-label="下一页">
        <Svg w={9} h={16}>
          <path d="M0 0V16L9 8Z" fill="#222" />
        </Svg>
      </button>
      <button type="button" aria-label="末页" className="ml-[18px]">
        <Svg w={16} h={16}>
          <path d="M7 0V16L16 8ZM1 0V16L5 12V4Z" fill="#222" />
        </Svg>
      </button>
      <button type="button" aria-label="上一视图" className="ml-3.5">
        <JumpIcon />
      </button>
      <button type="button" aria-label="下一视图" className="ml-3">
        <JumpIcon faded />
      </button>
    </div>
    <div className="flex items-center justify-end pr-5">
      <button type="button" aria-label="单页" className="px-1">
        <ViewIcon kind="single" />
      </button>
      <button type="button" aria-label="连续" className="mx-1 bg-[#c3d6f1] px-[5px] py-px">
        <ViewIcon kind="scroll" />
      </button>
      <button type="button" aria-label="对开" className="px-0.5">
        <ViewIcon kind="facing" />
      </button>
      <button type="button" aria-label="连续对开" className="ml-2.5">
        <ViewIcon kind="both" />
      </button>
      <button type="button" className="ml-7 flex items-center text-[#333]">
        68.36%
        <Caret className="ml-6" />
      </button>
      <button type="button" aria-label="缩小" className="ml-1.5">
        <Svg>
          <circle cx="10" cy="10" r="9" stroke="#333" />
          <path d="M5 10H15" stroke="#222" strokeWidth="1.300" />
        </Svg>
      </button>
      <div className="relative mx-2 flex h-5 w-28 items-center">
        <span className="absolute left-[57px] h-1.5 w-px bg-[#222]" />
        <input
          type="range"
          aria-label="缩放"
          min="0"
          max="100"
          defaultValue="32"
          className="relative h-px w-full appearance-none bg-[#222] [&::-webkit-slider-thumb]:h-3 [&::-webkit-slider-thumb]:w-1.5 [&::-webkit-slider-thumb]:appearance-none [&::-webkit-slider-thumb]:bg-[#222]"
        />
      </div>
      <button type="button" aria-label="放大" className="ml-1">
        <Svg>
          <circle cx="10" cy="10" r="9" stroke="#333" />
        </Svg>
      </button>
    </div>
    {/* floating input method badge */}
    <div className="absolute top-1.5 right-3 flex h-[27px] w-20 items-center justify-end gap-2 bg-linear-to-r from-transparent via-[#7fe8fb]/80 via-40% to-[#b9f2fb]/60 pr-2.5 text-lg font-bold text-[#08a5c0]">
      中
      <Svg w={20} h={24}>
        <path d="M4 22L9 12M6 2L7 10L12 11L17 5M11 11C15 11 17 8 17 4M3 13L9 9" stroke="#08a5c0" strokeWidth="3.200" />
      </Svg>
    </div>
  </div>
);

/* ---------- task bar ---------- */

const taskItems = [
  <path d="M28 6Q32 1 42 4M38 6Q46 0 53 6" stroke="#7ab648" strokeWidth="2" />,
  <path d="M22 6L32 2L37 6M43 6L46 3V6Z" fill="#2ccb94" stroke="#2ccb94" />,
  <path d="M25 6Q34 0 46 3L43 6Z" fill="#f5d90a" stroke="#4aa56c" strokeWidth=".5" />,
  <path d="M21 3L48 6H21Z" fill="#1d2a96" />,
];

const TaskBar = () => (
  <div className="flex h-[9px] shrink-0 items-end overflow-hidden bg-[#fff5e0] pl-[249px]">
    <div className="h-1.5 w-[65px] rounded-t bg-[#fbeca4]" />
    <div className="mx-0.5 flex h-[7px] gap-px">
      <span className="w-[3px] bg-[#8fd8cc]" />
      <span className="w-[3px] bg-[#8fd8cc]" />
    </div>
    <div className="flex gap-[3px]">
      {taskItems.map((shape, i) => (
        <div key={i} className="rounded-t bg-[#fbeca4]">
          <Svg w={73} h={6}>{shape}</Svg>
        </div>
      ))}
      <div className="rounded-t bg-[#fbcf17]">
        <Svg w={73} h={6}>
          <path d="M16 2H46V6H16ZM47 2L52 6H47Z" fill="#f7931e" />
        </Svg>
      </div>
    </div>
    {/* top edge of the clock */}
    <Svg w={38} h={2} className="mr-[97px] ml-auto">
      <path d="M1 1H5M9 1H13M24 1H28M34 1H36" stroke="#8f8168" strokeWidth="2" />
    </Svg>
  </div>
);

const LevelMeter = () => (
  <div className="absolute right-0 bottom-0 flex h-[59px] w-[13px] flex-col items-center rounded-tl border-2 border-[#4a4d57] bg-[#5d6170] pt-2">
    <Svg w={6} h={50}>
      <path d="M3 0V22" stroke="#333" strokeWidth="6" strokeDasharray="1 1" />
      <path d="M3 22V34" stroke="#d2cf5c" strokeWidth="6" strokeDasharray="2 1" />
      <path d="M3 34V50" stroke="#5fc488" strokeWidth="6" strokeDasharray="2 1" />
    </Svg>
  </div>
);

const App = () => {
  return (
    <div className="relative flex h-screen flex-col overflow-hidden bg-[#efefef] font-['Noto_Sans','Noto_Sans_CJK_SC',sans-serif]">
      <header>
        <TitleBar />
        <MenuBar />
        <Ribbon />
        <DocTabs />
      </header>
      <Workspace />
      <StatusBar />
      <TaskBar />
      <LevelMeter />
    </div>
  );
};

export default App;
